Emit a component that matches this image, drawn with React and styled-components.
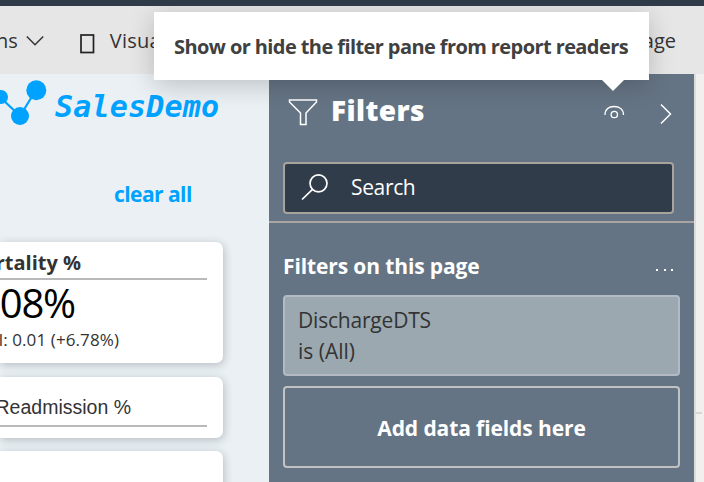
import React from "react";
import styled, { createGlobalStyle } from "styled-components";

const GlobalStyle = createGlobalStyle`
  * { box-sizing: border-box; }
  body { margin: 0; overflow: hidden; }
`;

const Page = styled.div`
  position: relative;
  display: flex;
  flex-direction: column;
  width: 704px;
  height: 482px;
  overflow: hidden;
  background: #eaf0f4;
  color: #333;
  font-family: "Open Sans", "Noto Sans", sans-serif;
`;

const Label = styled.span`
  display: block;
  white-space: nowrap;
  font-size: ${(p) => p.$size || 20}px;
  font-weight: ${(p) => p.$weight || 400};
  letter-spacing: ${(p) => p.$track || 0}px;
  line-height: ${(p) => p.$line || 28}px;
  color: ${(p) => p.$color || "inherit"};
`;

const TopBar = styled.div`
  flex: none;
  height: 6px;
  background: #2f3b49;
`;

const Toolbar = styled.div`
  flex: none;
  display: flex;
  align-items: center;
  height: 68px;
  padding: 2px 28px 0 0;
  background: #e6e6e6;
`;

const MenuItem = styled.div`
  display: flex;
  align-items: center;
  gap: ${(p) => p.$gap || 0}px;
  margin-left: ${(p) => p.$left};
`;

const Content = styled.div`
  flex: 1;
  display: flex;
  min-height: 0;
`;

const Report = styled.div`
  flex: none;
  width: 269px;
  overflow: hidden;
`;

const Logo = styled.div`
  display: flex;
  height: 56px;
`;

const LogoMark = styled.svg`
  display: block;
  flex: none;
`;

const LogoText = styled.span`
  margin: 16px 0 0 5px;
  font: italic 700 30px/34px "DejaVu Sans Mono", monospace;
  letter-spacing: 0.2px;
  color: #00a2ff;
`;

const ClearRow = styled.div`
  display: flex;
  height: 112px;
  padding: 50px 0 0 114px;
`;

const Card = styled.div`
  width: 223px;
  height: ${(p) => p.$height}px;
  margin-bottom: ${(p) => p.$gap || 0}px;
  padding-top: ${(p) => p.$top || 0}px;
  border-radius: 0 7px 7px 0;
  background: #fff;
  box-shadow: 1px 2px 9px rgba(70, 80, 90, 0.32);
`;

const CardClip = styled.div`
  display: flex;
  justify-content: flex-end;
  width: ${(p) => p.$width}px;
  overflow: hidden;
`;

const Rule = styled.div`
  width: 207px;
  height: 2px;
  margin-top: ${(p) => p.$top}px;
  background: #b9b9b9;
`;

const MeasureName = styled(Label)`
  font-family: "Liberation Sans", Arial, sans-serif;
`;

const Pane = styled.aside`
  flex: none;
  display: flex;
  flex-direction: column;
  width: 427px;
  border-right: 2px solid #dedddb;
  background: #657484;
  color: #fff;
`;

const PaneHeader = styled.header`
  display: flex;
  align-items: flex-start;
  height: 88px;
  padding: 22px 0 0 19px;
`;

const PaneTitle = styled(Label)`
  margin: -2px 0 0 13px;
  width: 272px;
`;

const Glyph = styled.svg`
  display: block;
  flex: none;
  fill: none;
  stroke: ${(p) => p.$stroke || "#fff"};
  stroke-width: ${(p) => p.$w || 1.5};
  margin: ${(p) => p.$margin || 0};
`;

const Search = styled.div`
  display: flex;
  align-items: center;
  gap: 22px;
  width: 391px;
  height: 52px;
  margin-left: 14px;
  padding: 0 0 2px 16px;
  border: 2px solid #a9a39e;
  border-radius: 4px;
  background: #313c4a;
`;

const Divider = styled.div`
  height: 2px;
  margin-top: 7px;
  background: #aaa5a1;
`;

const SectionHeader = styled.div`
  display: flex;
  justify-content: space-between;
  height: 72px;
  padding: 29px 21px 0 14px;
`;

const Dots = styled.div`
  display: flex;
  gap: 5.5px;
  padding-top: 17px;

  i {
    width: 2px;
    height: 2px;
    background: #fff;
  }
`;

const FilterCard = styled.div`
  width: 397px;
  height: 81px;
  margin: 0 0 10px 14px;
  padding: 8px 0 0 13px;
  border: 2px solid #b3b9c5;
  border-radius: 4px;
  background: #9ba8b0;
  color: #333;
`;

const DropZone = styled.div`
  display: flex;
  align-items: center;
  justify-content: center;
  width: 397px;
  height: 82px;
  margin-left: 14px;
  padding-top: 2px;
  border: 2px solid #c2c2c2;
  border-radius: 4px;
`;

const Gutter = styled.div`
  flex: 1;
  padding-top: 338px;
  background: #f1f0ee;

  &::before {
    content: "";
    display: block;
    width: 6px;
    height: 2px;
    background: #d8d8d8;
  }
`;

const Tooltip = styled.div`
  position: absolute;
  left: 154px;
  top: 12px;
  width: 495px;
  height: 68px;
  padding: 21px 0 0 20px;
  background: #fff;
  color: #404040;
  box-shadow: 0 5px 26px rgba(0, 0, 0, 0.2);

  &::after {
    content: "";
    position: absolute;
    left: 448px;
    top: 68px;
    border: 11px solid transparent;
    border-bottom-width: 0;
    border-top-color: #fff;
  }
`;

const TopEdge = styled.div`
  position: absolute;
  left: 0;
  top: 0;
  width: 704px;
  height: 6px;
  background: #2f3b49;
`;

export default function App() {
  return (
    <Page>
      <GlobalStyle />
      <TopBar />
      <Toolbar>
        <MenuItem $left="-4px" $gap={8}>
          <Label>ns</Label>
          <Glyph width="18" height="12" viewBox="0 0 18 12" $stroke="#333">
            <path d="M.8 1.5 9 9.7 17.2 1.5" />
          </Glyph>
        </MenuItem>
        <MenuItem $left="36px" $gap={15}>
          <Glyph width="15" height="20" viewBox="0 0 15 20" $stroke="#222" $w={1.7} $margin="5px 0 0">
            <rect x="1" y="1" width="12.5" height="17.5" />
          </Glyph>
          <Label $track={0.25}>Visual</Label>
        </MenuItem>
        <MenuItem $left="auto">
          <Label>Page</Label>
        </MenuItem>
      </Toolbar>
      <Content>
        <Report>
          <Logo>
            <LogoMark width="50" height="56" viewBox="0 0 50 56" fill="#00a2ff">
              <path d="M0 23 20 42 36 16" fill="none" stroke="#00a2ff" strokeWidth="2.2" />
              <circle cx="1" cy="23" r="7" />
              <circle cx="20" cy="42" r="9" />
              <circle cx="36.3" cy="16.3" r="10" />
            </LogoMark>
            <LogoText>SalesDemo</LogoText>
          </Logo>
          <ClearRow>
            <Label $size={21} $weight={700} $track={-0.55} $color="#00a2ff">clear all</Label>
          </ClearRow>
          <Card $height={121} $gap={14} $top={7}>
            <CardClip $width={81}>
              <Label $weight={700}>Mortality %</Label>
            </CardClip>
            <Rule $top={1} />
            <CardClip $width={75}>
              <Label $size={40} $line={46} $track={-1.2} $color="#000">0.08%</Label>
            </CardClip>
            <CardClip $width={119}>
              <Label $size={17} $track={0.1}>Goal: 0.01 (+6.78%)</Label>
            </CardClip>
          </Card>
          <Card $height={61} $gap={13} $top={16}>
            <CardClip $width={131}>
              <MeasureName $size={19.5}>Readmission %</MeasureName>
            </CardClip>
            <Rule $top={4} />
          </Card>
          <Card $height={60} />
        </Report>
        <Pane>
          <PaneHeader>
            <Glyph width="30" height="30" viewBox="0 0 30 30" $margin="2px 0 0">
              <path d="M1.5 2H28.5V4L18 15V26.5H12.5V15L1.5 4Z" />
            </Glyph>
            <PaneTitle $size={28} $weight={800} $track={0.4} $line={32}>Filters</PaneTitle>
            <Glyph width="22" height="16" viewBox="0 0 22 16" $w={1.3} $margin="8px 0 0 0">
              <path d="M2 11C2 5 6 2.5 11 2.5S20.500 5 20.500 11" />
              <circle cx="11.300" cy="10.500" r="3.200" />
            </Glyph>
            <Glyph width="14" height="22" viewBox="0 0 14 22" $w={1.5} $margin="7px 0 0 34px">
              <path d="M2 1.500 11.500 11 2 20.500" />
            </Glyph>
          </PaneHeader>
          <Search>
            <Glyph width="28" height="28" viewBox="0 0 28 28" $w={1.7}>
              <circle cx="17.500" cy="10.300" r="8.500" />
              <path d="M11.500 16.300 1 26.500" />
            </Glyph>
            <Label $size={21} $track={-0.35}>Search</Label>
          </Search>
          <Divider />
          <SectionHeader>
            <Label $size={21} $weight={700} $track={-0.12}>Filters on this page</Label>
            <Dots><i /><i /><i /></Dots>
          </SectionHeader>
          <FilterCard>
            <Label $size={21} $line={31} $track={-0.2}>DischargeDTS</Label>
            <Label $size={21} $line={31}>is (All)</Label>
          </FilterCard>
          <DropZone>
            <Label $size={21} $weight={700} $track={-0.1}>Add data fields here</Label>
          </DropZone>
        </Pane>
        <Gutter />
      </Content>
      <Tooltip>
        <Label $size={20} $weight={700} $track={-0.59}>Show or hide the filter pane from report readers</Label>
      </Tooltip>
      <TopEdge />
    </Page>
  );
}
